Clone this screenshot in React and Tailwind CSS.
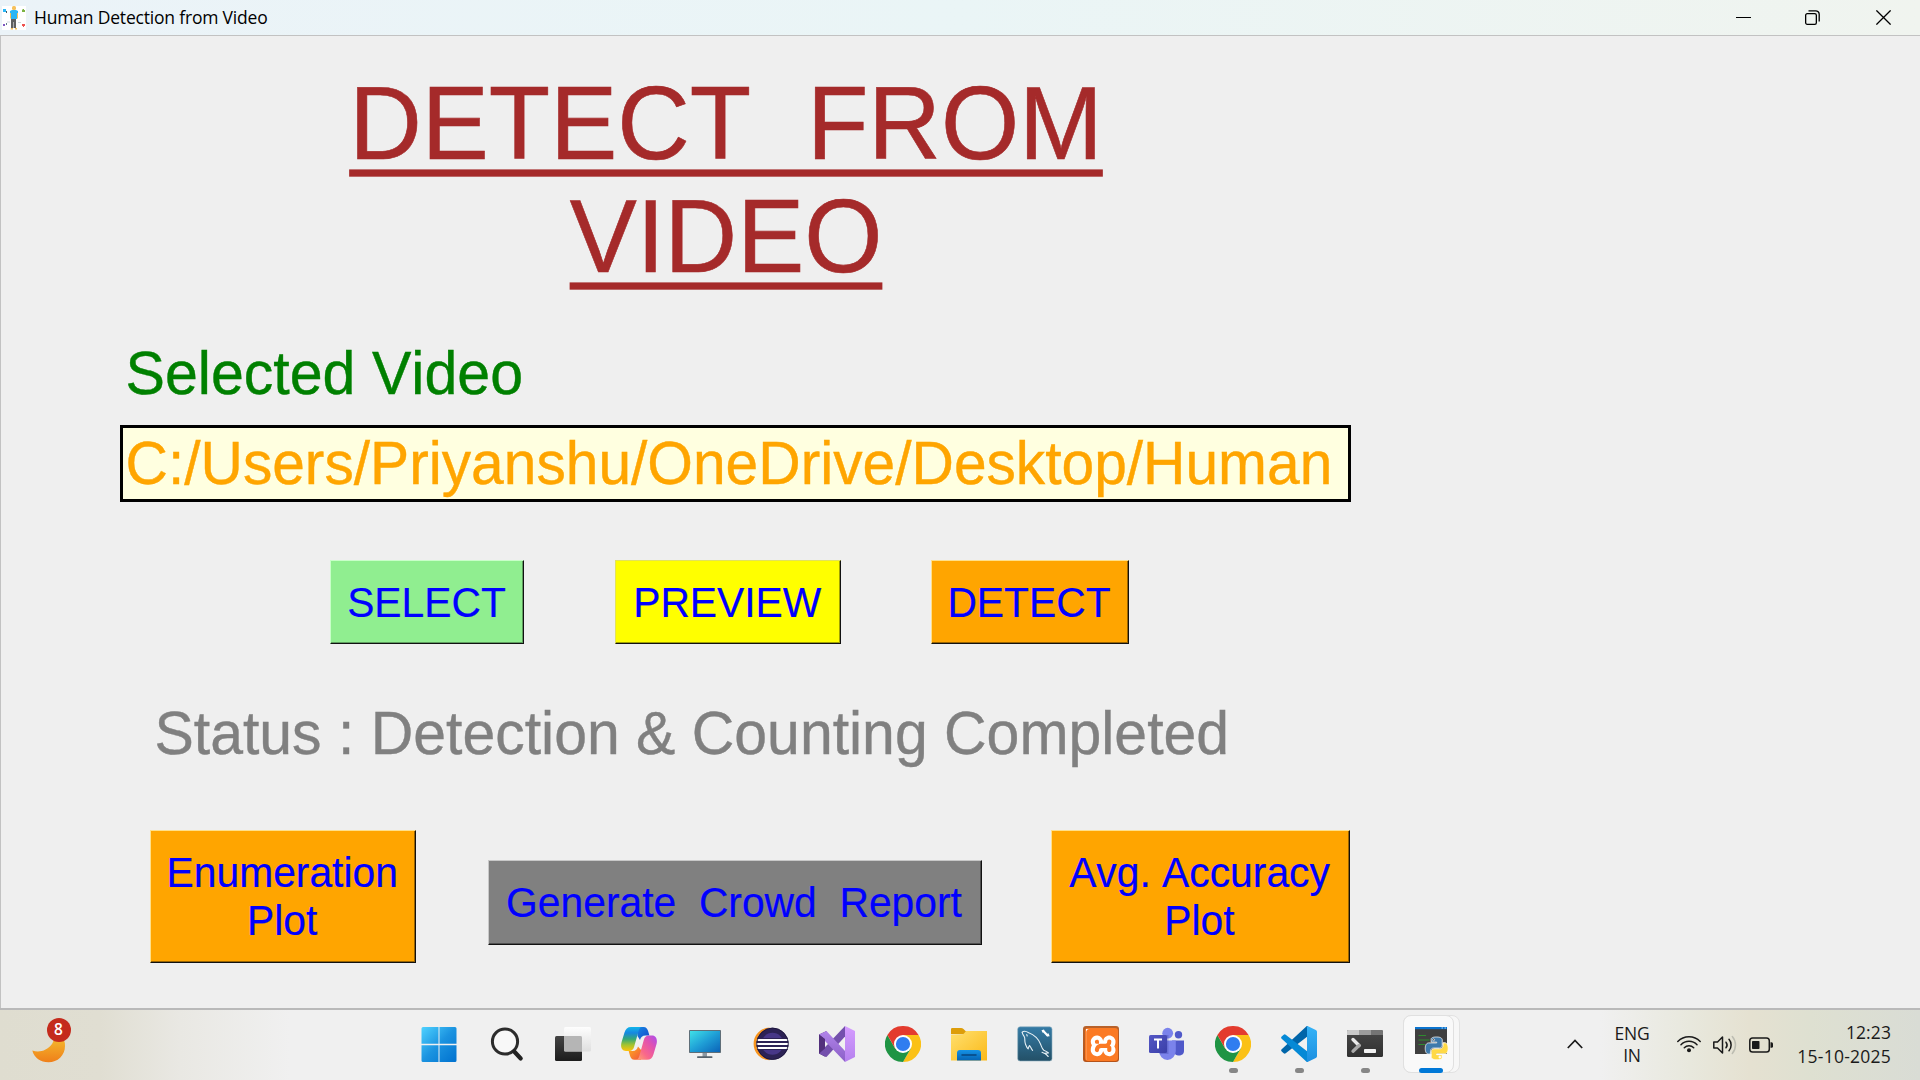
import React from "react";
import { SiXampp } from "react-icons/si";

const ARIAL = "font-['Liberation_Sans',Arial,sans-serif] [font-kerning:none]";
const SEGOE = "font-['Open_Sans','Noto_Sans',sans-serif]";

function Svg({ children, className = "size-9", box = "0 0 36 36" }) {
  return (
    <svg className={className} viewBox={box} fill="none">
      {children}
    </svg>
  );
}

function Grad({ id, stops, x1 = 0, y1 = 0, x2 = 0, y2 = 1 }) {
  return (
    <linearGradient id={id} x1={x1} y1={y1} x2={x2} y2={y2}>
      {stops.map((c, i) => (
        <stop key={i} offset={i / (stops.length - 1)} stopColor={c} />
      ))}
    </linearGradient>
  );
}

const PersonIcon = () => (
  <Svg className="size-6" box="0 0 24 24">
    <rect width="24" height="24" fill="#fff" />
    <rect x="1" y="3" width="3" height="3" fill="#29b6f6" />
    <rect x="4" y="5" width="1" height="2" fill="#455a64" />
    <path d="M20 6V4l1-1h1v1h1v2z" fill="#7cb342" />
    <rect x="1" y="18" width="2" height="2" fill="#7e57c2" />
    <rect x="4" y="17" width="1" height="2" fill="#607d8b" />
    <path d="M20 18h3v2h-1v1h-1v-1h-1z" fill="#ef5350" />
    <path d="M5 16h3M16 16.5h3" stroke="#cfd8dc" />
    <rect x="10" y="0" width="4" height="4" rx="1.5" fill="#f6c15c" />
    <path d="M8 5l2-1h4l2 1v3h-1v5H9V8H8z" fill="#29b6f6" />
    <path d="M8 7v5l1 1V7zM16 7v5l-1 1V7z" fill="#f6c15c" />
    <path d="M9 13h5v9h-2v-6h-1v6H9z" fill="#616161" />
    <path d="M11 14v8" stroke="#616161" />
    <path d="M9 22h2v1.500H8.500zM13 22h2v1.500h-2z" fill="#f6c15c" />
  </Svg>
);

const StartIcon = () => (
  <Svg>
    <defs><Grad id="win" x2="1" stops={["#4fd2ff", "#1b93e0", "#0071cf"]} /></defs>
    <path d="M2 1h15.500v16.800H.5V2.500A1.500 1.500 0 0 1 2 1zM18.500 1h15.500a1.500 1.500 0 0 1 1.500 1.500v15.300H18.500zM.5 19.200h17V36H2A1.500 1.500 0 0 1 .5 34.500zM18.500 19.200h17V34.500A1.500 1.500 0 0 1 34 36H18.500z" fill="url(#win)" />
  </Svg>
);

const SearchIcon = () => (
  <Svg>
    <circle cx="16" cy="15.500" r="12.600" stroke="#2c2c2c" strokeWidth="3" fill="#f8f8f8" />
    <path d="M25.200 25.500l6.500 7" stroke="#222" strokeWidth="4.200" strokeLinecap="round" />
  </Svg>
);

const TaskViewIcon = () => (
  <Svg>
    <defs>
      <Grad id="tv" stops={["#444", "#1c1c1c"]} />
      <Grad id="tvw" stops={["#fff", "#ddd"]} />
    </defs>
    <rect x="0" y="10" width="27" height="25" rx="1.500" fill="url(#tv)" />
    <rect x="9" y="1" width="27" height="24.500" rx="1.500" fill="url(#tvw)" opacity=".9" />
    <path d="M9 10h16.500a1.500 1.500 0 0 1 1.500 1.500v14H10.500A1.500 1.500 0 0 1 9 24z" fill="#b5b5b5" />
  </Svg>
);

const CopilotIcon = () => (
  <Svg>
    <defs>
      <Grad id="cpa" stops={["#12b5ea", "#1687e0", "#35a876", "#a5c42e", "#ffc30a"]} />
      <Grad id="cpb" x1="1" x2="0" stops={["#a94df0", "#e152b0", "#f9688a", "#ffa96b"]} />
      <Grad id="cpc" x2="1" stops={["#1688e4", "#1546c9"]} />
      <Grad id="cpd" x2="1" stops={["#ffb01c", "#f2543d"]} />
    </defs>
    <path d="M16 1h6.500c2.800 0 3.800 1.800 4.600 4l1.300 4.500h-4c-3 0-4.600 1.700-5.400 4.500L16.500 10z" fill="url(#cpc)" />
    <path d="M20 33.800h-6.500c-2.800 0-3.800-1.800-4.500-4l-1.300-4.800h4c3 0 4.400-1.700 5.300-4.500l3.500 4z" fill="url(#cpd)" />
    <path d="M10 1h11c-2 0-2.800 2-3.400 4l-4.400 15.500c-.8 2.800-2.200 4.500-5.200 4.500H5C.5 25-.7 20.500.6 16L3.500 6.500C4.600 3 6.500 1 10 1z" fill="url(#cpa)" />
    <path d="M26 33.800H15c2 0 2.800-2 3.400-4L22.800 14c.8-2.800 2.200-4.500 5.200-4.500h3c4.500 0 5.700 4.500 4.400 9l-2.900 9.700c-1.100 3.600-3 5.600-6.500 5.600z" fill="url(#cpb)" />
  </Svg>
);

const MonitorIcon = () => (
  <Svg>
    <defs><Grad id="mon" x2="1" stops={["#3fe0e8", "#1f9fd6", "#0b63b8"]} /></defs>
    <rect x="15.500" y="26" width="4.500" height="5" fill="#8d99a3" />
    <rect x="2" y="4" width="32" height="23" rx=".8" fill="#5f6e78" />
    <rect x="3" y="5" width="30" height="21" fill="url(#mon)" />
    <rect x="10" y="30.300" width="15.500" height="1.700" rx=".8" fill="#56626c" />
  </Svg>
);

const EclipseIcon = () => (
  <Svg>
    <defs><clipPath id="ecl"><circle cx="19.500" cy="17.800" r="16" /></clipPath></defs>
    <path d="M17 1.500a16.300 16.300 0 0 0 0 32.800A19 19 0 0 1 6 18 19 19 0 0 1 17 1.500z" fill="#f7941e" />
    <circle cx="19.500" cy="17.800" r="16" fill="#2c2255" />
    <g clipPath="url(#ecl)">
      <circle cx="19.500" cy="17.800" r="11" fill="#473788" />
      <rect x="3" y="12" width="34" height="12" fill="#2c2255" />
      <path d="M3 14h34M3 18h34M3 22h34" stroke="#fff" strokeWidth="1.900" />
    </g>
    <circle cx="19.500" cy="17.800" r="15.700" stroke="#1b1437" strokeWidth=".8" />
  </Svg>
);

const VisualStudioIcon = () => (
  <Svg>
    <defs>
      <Grad id="vsr" stops={["#d59cff", "#b581ee"]} />
      <Grad id="vsm" stops={["#b184ea", "#8b5fc7"]} />
    </defs>
    <path d="M0 8.500L7.500 5v6L6 12.500v11L7.500 25l-1 6L0 27.500z" fill="#52307c" />
    <path d="M0 27.500L26 0v10.500L7.500 31z" fill="#7450ad" />
    <path d="M0 8.500L7.500 5 26 25v11L6 15v-2z" fill="url(#vsm)" />
    <path d="M0 8.500v19l6-5v-9z" fill="#52307c" />
    <path d="M26 0l10 5v26l-10 5z" fill="url(#vsr)" />
  </Svg>
);

const ChromeIcon = () => (
  <Svg>
    <path d="M18 18L2.410 9A18 18 0 0 1 33.590 9z" fill="#e33b2e" />
    <path d="M18 9h15.590A18 18 0 0 1 18 36l7.790-13.500z" fill="#fbc116" />
    <path d="M25.790 22.500L18 36A18 18 0 0 1 2.410 9l7.790 13.500z" fill="#1f9444" />
    <path d="M2.410 9L10.200 22.500 18 18V9z" fill="#e33b2e" />
    <circle cx="18" cy="18" r="9" fill="#fff" />
    <circle cx="18" cy="18" r="7.100" fill="#2f7df0" />
  </Svg>
);

const FolderIcon = () => (
  <Svg>
    <defs>
      <Grad id="fol" x2="1" stops={["#ffe070", "#fbb917"]} />
      <Grad id="folb" stops={["#1593e6", "#0664b4"]} />
    </defs>
    <path d="M0 8V3.200A1.200 1.200 0 0 1 1.200 2H10c1 0 1.800.4 2.500 1l2 2H36v4z" fill="#dd9d0a" />
    <path d="M0 8.500h10.500c1 0 1.800-.3 2.500-1L15 5h21v29.500H0z" fill="url(#fol)" />
    <path d="M6 34.500V27a3 3 0 0 1 3-3h18a3 3 0 0 1 3 3v7.500z" fill="url(#folb)" />
    <path d="M11 29h14" stroke="#07467f" strokeWidth="1.500" strokeLinecap="round" />
  </Svg>
);

const MySqlIcon = () => (
  <Svg>
    <defs><Grad id="my" stops={["#347ba6", "#235067"]} /></defs>
    <rect x=".7" y=".8" width="34.300" height="34.200" rx="2.500" fill="url(#my)" stroke="#8fb0c0" strokeWidth=".6" />
    <g stroke="#e6f0f5" strokeWidth="1.100" strokeLinejoin="round" strokeLinecap="round">
      <path d="M5.200 6.200c1.500-1.400 4.300-.8 6.500.6 6 2.300 9.800 6.500 11.800 11.200 1 2.700 1.600 5 3.300 6.300 1.800.8 3.500 1.600 4.700 2.600l-3.500.3 3.200 3.300" />
      <path d="M5.200 6.200c.2 2.300 1.600 3.400 2.300 5 .7 2.200-.2 4.300 1 7 .7 1.800 1.500 3.800 2.600 4.600.8-1 .5-2.800 1.500-3.200 1.200 1.200 1.600 3.400 3 4.700" />
      <path d="M25 26.300l3.800 1.600M9.800 8.600l.4 1.400" />
    </g>
    <path d="M26.800 5.500l3.500 3.700" stroke="#fff" strokeWidth="2.200" strokeLinecap="round" />
    <path d="M24.500 4.300l2.500-.8.600 1.900-2 1.300zM29 8.500l2.500-1.300 1.200 3-2.700.2z" fill="#fff" />
  </Svg>
);

const XamppIcon = () => (
  <span className="grid size-9 place-items-center rounded-[3px] bg-linear-to-b from-[#b8622b] to-[#b55319]">
    <span className="grid size-[33px] place-items-center rounded-[3px] bg-[#fb7a24]">
      <span className="grid size-[31px] place-items-center overflow-hidden bg-white">
        <SiXampp className="size-[34px] shrink-0 text-[#fb7a24]" />
      </span>
    </span>
  </span>
);

const TeamsIcon = () => (
  <Svg>
    <defs><Grad id="tm" x2="1" stops={["#5558c5", "#3a3fa8"]} /></defs>
    <circle cx="29.500" cy="8.700" r="3.700" fill="#5059c9" />
    <path d="M23 14.500h12V25c0 3-2.300 4.500-5 4.500s-5-1.500-5-4z" fill="#5059c9" />
    <circle cx="18.700" cy="7.200" r="5.400" fill="#7b83eb" />
    <path d="M10 14.500h16.800V25a8.400 8.900 0 0 1-16.800 0z" fill="#7b83eb" />
    <path d="M14 9h5.500v19H11.300L10 26z" fill="#3f45a5" opacity=".35" />
    <rect x="0" y="9" width="18" height="18" rx="1.500" fill="url(#tm)" />
    <path d="M5 13.600h8M9 13.600v9" stroke="#fff" strokeWidth="2" />
  </Svg>
);

const CodeIcon = () => (
  <Svg>
    <defs><Grad id="vsc" stops={["#35b3f7", "#1c8fe0"]} /></defs>
    <path d="M.7 23.200a1.500 1.500 0 0 0 0 2.200l2 1.800a1.500 1.500 0 0 0 2 0L27 10V0a2 2 0 0 0-2 .7z" fill="#0065a9" />
    <path d="M.7 12.800a1.500 1.500 0 0 1 0-2.200l2-1.800a1.500 1.500 0 0 1 2 0L27 26v10a2 2 0 0 1-2-.7z" fill="#0589d6" />
    <path d="M26.500 0L34.800 4A2 2 0 0 1 36 5.800v24.400A2 2 0 0 1 34.800 32l-8.300 4c-.8-.5-.8-1-.5-1.800V1.800c-.3-.8-.3-1.300.5-1.800z" fill="url(#vsc)" />
  </Svg>
);

const TerminalIcon = () => (
  <Svg>
    <defs><Grad id="trm" stops={["#484848", "#303030"]} /></defs>
    <rect x="0" y="4" width="36" height="27" rx="1.500" fill="url(#trm)" />
    <path d="M0 9V5.500A1.500 1.500 0 0 1 1.500 4H12v5z" fill="#c9c9c9" />
    <path d="M12 4h12v5H12z" fill="#9c9c9c" />
    <path d="M24 4h10.500A1.500 1.500 0 0 1 36 5.500V9H24z" fill="#747474" />
    <path d="M6 13.500l6 6" stroke="#e9e9e9" strokeWidth="3.400" strokeLinecap="round" />
    <path d="M12 19.500l-6 5.700" stroke="#a9a9a9" strokeWidth="3.400" strokeLinecap="round" />
    <rect x="17" y="23" width="12" height="4" rx=".8" fill="#f2f2f2" />
  </Svg>
);

const SNAKE =
  "M14.25.18l.9.2.73.26.59.3.45.32.34.34.25.34.16.33.1.3.04.26.02.2-.01.13V8.5l-.05.63-.13.55-.21.46-.26.38-.3.31-.33.25-.35.19-.35.14-.33.1-.3.07-.26.04-.21.02H8.77l-.69.05-.59.14-.5.22-.41.27-.33.32-.27.35-.2.36-.15.37-.1.35-.07.32-.04.27-.02.21v3.06H3.17l-.21-.03-.28-.07-.32-.12-.35-.18-.36-.26-.36-.36-.35-.46-.32-.59-.28-.73-.21-.88-.14-1.05-.05-1.23.06-1.22.16-1.04.24-.87.32-.71.36-.57.4-.44.42-.33.42-.24.4-.16.36-.1.32-.05.24-.01h.16l.06.01h8.16v-.83H6.18l-.01-2.75-.02-.37.05-.34.11-.31.17-.28.25-.26.31-.23.38-.2.44-.18.51-.15.58-.12.64-.1.71-.06.77-.04.84-.02 1.27.05zm-6.3 1.98l-.23.33-.08.41.08.41.23.34.33.22.41.09.41-.09.33-.22.23-.34.08-.41-.08-.41-.23-.33-.33-.22-.41-.09-.41.09z";

const PythonConsoleIcon = () => (
  <Svg>
    <rect x="2" y="2" width="32" height="27" fill="#3f3f3f" />
    <rect x="2" y="2" width="32" height="2.200" fill="#0b74cf" />
    <path d="M28.500 3h1.500M31.500 3h1.500" stroke="#bfe0fa" strokeWidth=".9" />
    <path d="M5.500 10.500H13M5.500 15h11M5.500 19.500H12" stroke="#2e8b2e" strokeWidth="1.100" />
    <g transform="translate(12.300 12) scale(.95)" strokeLinejoin="round">
      <path d={SNAKE} fill="#3e7aac" stroke="#eee" strokeWidth=".9" />
      <path d={SNAKE} fill="#ffd945" stroke="#fff" strokeWidth=".9" transform="rotate(180 12 12)" />
    </g>
  </Svg>
);

const MoonIcon = () => (
  <Svg className="h-[24px] w-[34px]" box="0 0 34 24">
    <defs><Grad id="moon" stops={["#f4b52b", "#ef7f1a"]} /></defs>
    <path d="M.3 11.500C7 13.700 15 12 20 5c.8-1.200 1.500-3 1.800-4.500h10A15.500 15.500 0 0 1 33 7c0 9.500-7.400 16.300-16.500 16.300C8.700 23.300 2.300 19 .3 11.500z" fill="url(#moon)" />
  </Svg>
);

const apps = [
  { id: "start", icon: StartIcon, nudge: "-ml-[4px]" },
  { id: "search", icon: SearchIcon },
  { id: "taskview", icon: TaskViewIcon },
  { id: "copilot", icon: CopilotIcon },
  { id: "monitor", icon: MonitorIcon },
  { id: "eclipse", icon: EclipseIcon },
  { id: "vs", icon: VisualStudioIcon },
  { id: "chrome", icon: ChromeIcon },
  { id: "folder", icon: FolderIcon },
  { id: "mysql", icon: MySqlIcon },
  { id: "xampp", icon: XamppIcon },
  { id: "teams", icon: TeamsIcon },
  { id: "chrome-2", icon: ChromeIcon, running: true },
  { id: "code", icon: CodeIcon, running: true },
  { id: "terminal", icon: TerminalIcon, running: true },
];

function TaskButton({ icon: Icon, running, nudge = "" }) {
  return (
    <div className="flex h-full w-[66px] flex-col items-center pt-4">
      <div className={`h-9 w-9 ${nudge}`}>
        <Icon />
      </div>
      {running && <span className="mt-1.5 ml-px h-[5px] w-[9px] rounded-full bg-[#868686]" />}
    </div>
  );
}

function TitleLine({ children }) {
  return (
    <span className="block h-[112.5px] origin-[50%_91px] scale-y-[1.04] whitespace-pre underline decoration-[7px] underline-offset-[10px] [-webkit-text-stroke:0.6px_#a52a2a] [text-decoration-skip-ink:none]">
      {children}
    </span>
  );
}

function RaisedButton({ className, children }) {
  return (
    <button
      className={`flex flex-col items-center justify-center border border-r-[#111] border-b-[#111] pt-[2px] text-[40.8px] leading-[48px] whitespace-pre text-[#0000ff] [-webkit-text-stroke:0.2px_#0000ff] ${className}`}
    >
      {children}
    </button>
  );
}

const Label = ({ children }) => (
  <span className="-ml-px block origin-[50%_38px] scale-y-[1.04]">{children}</span>
);

export default function App() {
  return (
    <div className="flex h-[1080px] w-[1920px] flex-col overflow-hidden bg-[#efefef]">
      <header className={`flex h-[35px] shrink-0 items-center bg-linear-to-r from-[#ebf3f8] via-[#eaf5f6] to-[#f0f4ef] pl-0.5 text-black ${SEGOE}`}>
        <PersonIcon />
        <h1 className="-mt-px ml-[8px] text-[17.5px] leading-6 tracking-[-0.19px]">Human Detection from Video</h1>
        <div className="ml-auto flex h-full items-center">
          <svg className="mr-[54px] h-4 w-[15px]" viewBox="0 0 15 16" fill="none" stroke="#000">
            <path d="M0 7.500h15" />
          </svg>
          <svg className="mr-[56px] size-[15px]" viewBox="0 0 15 15" fill="none" stroke="#000" strokeWidth="1.300">
            <rect x=".65" y="3.650" width="10.700" height="10.700" rx="1.600" />
            <path d="M3.500.8h7.200a3.500 3.500 0 0 1 3.500 3.500v7.200" />
          </svg>
          <svg className="mr-[29px] size-[15px]" viewBox="0 0 15 15" fill="none" stroke="#000" strokeWidth="1.300">
            <path d="M.4.4l14.200 14.200M14.600.4L.4 14.600" />
          </svg>
        </div>
      </header>

      <main className={`flex h-[973px] shrink-0 flex-col border-t border-l border-[#c2c2c2] bg-[#efefef] ${ARIAL}`}>
        <h2 className="mt-[32px] ml-[119px] w-[1212px] text-center text-[100.5px] leading-[112.5px] text-[#a52a2a]">
          <TitleLine>DETECT  FROM</TitleLine>
          <TitleLine>VIDEO</TitleLine>
        </h2>

        <p className="mt-[47px] ml-[124.5px] h-[68px] origin-[50%_54px] scale-y-[1.04] text-[59.1px] leading-[68px] text-[#008000] [-webkit-text-stroke:0.4px_#008000]">
          Selected Video
        </p>
        <div className="mt-[17px] ml-[119px] flex h-[77px] w-[1231px] items-center overflow-hidden border-3 border-black bg-[#ffffe0] pl-[2.5px] text-[58.7px] leading-[68px] whitespace-pre text-[#ffa500]">
          <span className="block origin-[50%_54px] scale-y-[1.04] [-webkit-text-stroke:0.4px_#ffa500]">C:/Users/Priyanshu/OneDrive/Desktop/Human</span>
        </div>

        <div className="mt-[58px] ml-[329px] flex h-[84px]">
          <RaisedButton className="mr-[91px] w-[194px] border-t-[#c8ffc8] border-l-[#c8ffc8] bg-[#90ee90] shadow-[inset_-1px_-1px_0_#5f9e5f]">
            <Label>SELECT</Label>
          </RaisedButton>
          <RaisedButton className="mr-[90px] w-[225.5px] border-t-[#e2e25c] border-l-[#e2e25c] bg-[#ffff00] shadow-[inset_-1px_-1px_0_#a0a000]">
            <Label>PREVIEW</Label>
          </RaisedButton>
          <RaisedButton className="w-[198px] border-t-[#ffe08a] border-l-[#ffe08a] bg-[#ffa500] shadow-[inset_-1px_-1px_0_#9a6400]">
            <Label>DETECT</Label>
          </RaisedButton>
        </div>

        <p className="mt-[56px] ml-[153.5px] h-[68px] origin-[50%_54px] scale-y-[1.04] text-[58.95px] leading-[68px] whitespace-pre text-[#808080] [-webkit-text-stroke:0.4px_#808080]">
          Status : Detection &amp; Counting Completed
        </p>

        <div className="mt-[62px] ml-[149px] flex items-start">
          <RaisedButton className="mr-[72px] h-[132.5px] w-[265.500px] border-t-[#ffe08a] border-l-[#ffe08a] bg-[#ffa500] shadow-[inset_-1px_-1px_0_#9a6400]">
            <Label>Enumeration</Label>
            <Label>Plot</Label>
          </RaisedButton>
          <RaisedButton className="mt-[30px] mr-[69px] h-[84.5px] w-[494px] border-t-[#c8c8c8] border-l-[#c8c8c8] bg-[#808080] shadow-[inset_-1px_-1px_0_#505050]">
            <Label>Generate  Crowd  Report</Label>
          </RaisedButton>
          <RaisedButton className="h-[132.5px] w-[299px] border-t-[#ffe08a] border-l-[#ffe08a] bg-[#ffa500] shadow-[inset_-1px_-1px_0_#9a6400]">
            <Label>Avg. Accuracy</Label>
            <Label>Plot</Label>
          </RaisedButton>
        </div>
      </main>

      <footer className={`flex h-[72px] shrink-0 border-t-2 border-[#b9b9b9] bg-[linear-gradient(90deg,#dfddd0_0px,#e0ded2_100px,#e9e8e3_180px,#f0f0f0_290px,#f0f0f0_1600px,#e8e8dd_1690px,#e5e1d1_1750px,#dee0d1_1810px,#d9dcd5_1920px)] text-[#1a1a1a] ${SEGOE}`}>
        <div className="flex w-[408px] pt-2 pl-8">
          <div className="relative h-14 w-10 pt-[21px]">
            <MoonIcon />
            <span className="absolute top-0 left-[14.500px] grid size-6 place-items-center rounded-full bg-[#c42b1c] text-[15.500px] leading-none font-semibold text-white">
              8
            </span>
          </div>
        </div>
        {apps.map(({ id, ...app }) => (
          <TaskButton key={id} {...app} />
        ))}
        <div className="mt-[5px] ml-[5px] flex h-[58px] w-[57px] rounded-lg border border-[#e2e2e2] bg-[#f7f7f7]">
          <div className="-my-px -ml-px flex h-[58px] w-[51px] flex-col items-center rounded-lg border border-[#e0e0e0] bg-[#f9f9f9] pt-2.5">
            <div className="-mt-px ml-[4px] size-9">
              <PythonConsoleIcon />
            </div>
            <span className="mt-[7px] ml-[5px] h-[5px] w-6 shrink-0 rounded-full bg-[#0078d7]" />
          </div>
        </div>
        <div className="-mt-0.5 ml-auto flex items-center pr-[29px]">
          <svg className="mr-7 h-[10px] w-4" viewBox="0 0 16 10" fill="none" stroke="#1a1a1a" strokeWidth="1.700">
            <path d="M.8 9L8 1.500 15.200 9" />
          </svg>
          <div className="mr-6 w-[42px] text-center text-[17.500px] leading-[22.5px] tracking-[-0.2px]">
            <div>ENG</div>
            <div>IN</div>
          </div>
          <svg className="mr-3 h-[18px] w-6" viewBox="0 0 24 18" fill="none" stroke="#1a1a1a" strokeWidth="1.500" strokeLinecap="round">
            <path d="M.8 6.500a15.500 15.500 0 0 1 22.400 0M4 9.700a11 11 0 0 1 16 0M7.300 12.700a6.600 6.600 0 0 1 9.400 0" />
            <circle cx="12" cy="15.300" r="2" fill="#1a1a1a" stroke="none" />
          </svg>
          <svg className="mt-0.5 mr-3 h-5 w-6" viewBox="0 0 24 20" fill="none" stroke="#1a1a1a" strokeWidth="1.500" strokeLinecap="round" strokeLinejoin="round">
            <path d="M.8 7h3.700l5-5v16l-5-5H.8z" />
            <path d="M13 7.200a4.500 4.500 0 0 1 0 5.600M16 4.200a9 9 0 0 1 0 11.600" />
            <path d="M19.300 1.500a13 13 0 0 1 0 17" stroke="#bdbdb2" />
          </svg>
          <svg className="mt-0.5 mr-[26px] h-4 w-6" viewBox="0 0 24 16" fill="none">
            <rect x=".8" y="1" width="19.500" height="14" rx="2.800" stroke="#1a1a1a" strokeWidth="1.500" />
            <rect x="3" y="4" width="7.500" height="8" rx=".8" fill="#1a1a1a" />
            <path d="M21.500 5.300h1A1.500 1.500 0 0 1 24 6.800v2.400a1.500 1.500 0 0 1-1.500 1.500h-1z" fill="#1a1a1a" />
          </svg>
          <div className="flex w-[92px] flex-col items-end text-[17.500px] leading-6 whitespace-nowrap">
            <div className="tracking-[0.1px]">12:23</div>
            <div className="tracking-[0.24px]">15-10-2025</div>
          </div>
        </div>
      </footer>
    </div>
  );
}
